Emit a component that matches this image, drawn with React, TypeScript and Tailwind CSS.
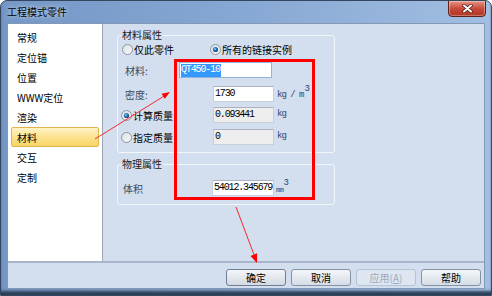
import React, { useId } from "react";

const CJK = "font-['Noto_Sans_CJK_SC','Noto_Sans',sans-serif]";
const MONO = "font-['Liberation_Mono','DejaVu_Sans_Mono',monospace]";

function Radio({ checked }: { checked?: boolean }) {
  const id = useId().replace(/:/g, "");
  return (
    <svg width="11" height="11" viewBox="0 0 11 11" className="shrink-0">
      <defs>
        <linearGradient id={`rg${id}`} x1="0" y1="0" x2="1" y2="1">
          <stop offset="0" stopColor="#d9dde3" />
          <stop offset="1" stopColor="#fbfcfd" />
        </linearGradient>
        <radialGradient id={`rd${id}`} cx="0.4" cy="0.4" r="0.6">
          <stop offset="0" stopColor="#8fd3f5" />
          <stop offset="0.5" stopColor="#2a7bb8" />
          <stop offset="1" stopColor="#173f73" />
        </radialGradient>
      </defs>
      <circle cx="5.5" cy="5.5" r="5" fill={`url(#rg${id})`} stroke="#8d969f" strokeWidth="1" />
      {checked && <circle cx="5.5" cy="5.5" r="2.6" fill={`url(#rd${id})`} />}
    </svg>
  );
}

function Field({
  value,
  w = "w-[61px]",
  grey,
}: {
  value: string;
  w?: string;
  grey?: boolean;
}) {
  return (
    <div
      className={`${w} h-[16px] shrink-0 flex items-center pl-[1px] overflow-hidden whitespace-nowrap border border-[#c6ced8] border-t-[#aab3bf] ${
        grey ? "bg-[#eeeeee]" : "bg-white"
      } ${MONO} text-[10px] tracking-[-1.15px] text-black leading-none`}
    >
      {value}
    </div>
  );
}

const items = ["常规", "定位锚", "位置", "WWW定位", "渲染", "材料", "交互", "定制"];

export default function App() {
  return (
    <div
      className={`relative w-[492px] h-[296px] overflow-hidden rounded-t-[7px] border border-[#34475f] bg-gradient-to-r from-[#7597c6] via-[#87a8d3] to-[#a2bee2] flex flex-col shadow-[inset_0_-5px_3px_-1px_#2b3f55] ${CJK}`}
    >
      {/* title bar */}
      <div className="h-[22px] shrink-0 flex items-start justify-between">
        <span className="pl-[6px] pt-[4px] text-[10px] leading-[14px] text-black [text-shadow:0_0_4px_#e6f0fb]">
          工程模式零件
        </span>
        <div className="-mt-px mr-[5px] w-[38px] h-[17px] rounded-b-[4px] border border-[#5d2119] bg-gradient-to-b from-[#e69585] via-[#c84a3b] to-[#b1311f] flex items-center justify-center shadow-[inset_0_0_1px_1px_rgba(255,255,255,0.35)]">
          <svg width="11" height="9" viewBox="0 0 11 9">
            <path d="M2 1.5 L9 7.5 M9 1.5 L2 7.5" stroke="#4a1a14" strokeWidth="3.4" strokeLinecap="round" />
            <path d="M2 1.5 L9 7.5 M9 1.5 L2 7.5" stroke="#ffffff" strokeWidth="2" strokeLinecap="round" />
          </svg>
        </div>
      </div>

      {/* client */}
      <div className="mx-[6px] mb-[6px] flex-1 min-h-0 flex flex-col border border-[#8398b5] bg-[#d3dfee]">
        <div className="flex h-[237px] shrink-0">
          {/* list */}
          <div className="w-[95px] shrink-0 bg-white border-r border-[#9ea6b1] pt-[3px] text-[10px] text-black">
            {items.map((it) =>
              it === "材料" ? (
                <div
                  key={it}
                  className="mx-[3px] h-[20px] flex items-center pl-[5px] rounded-[2px] border border-[#e0b64c] bg-gradient-to-b from-[#fef3c8] via-[#fce38f] to-[#f8d466]"
                >
                  {it}
                </div>
              ) : (
                <div key={it} className="h-[20px] flex items-center pl-[9px]">
                  {it}
                </div>
              )
            )}
          </div>

          {/* right panel */}
          <div className="flex-1 pl-[14px] pt-[4px] flex flex-col text-[10px]">
            <fieldset className="w-[218px] rounded-[3px] border border-[#f2f6fb] pb-[7px] flex flex-col">
              <legend className="ml-[3px] px-[1px] leading-[14px] text-[#1b1b1b]">材料属性</legend>
              <div className="flex items-center h-[14px] text-black">
                <div className="flex items-center gap-[1px] ml-[4px] w-[88px]">
                  <Radio />
                  <span>仅此零件</span>
                </div>
                <div className="flex items-center gap-[1px]">
                  <Radio checked />
                  <span>所有的链接实例</span>
                </div>
              </div>
              <div className="flex items-center h-[16px] mt-[6px]">
                <span className="ml-[7px] w-[54px] text-[#3a4b62]">材料:</span>
                <div className={`w-[93px] h-[16px] flex items-center pl-[1px] border border-[#8fb4e0] bg-white ${MONO} text-[10px] tracking-[-1.15px] leading-none`}>
                  <span className="bg-[#3399ff] text-white h-[13px] flex items-center pr-[1px]">QT450-10</span>
                </div>
              </div>
              <div className="flex items-center h-[16px] mt-[8px]">
                <span className="ml-[7px] w-[88px] text-[#3a4b62]">密度:</span>
                <Field value="1730" />
                <span className={`ml-[3px] ${MONO} text-[9px] tracking-[-1px] text-[#2a4677] flex items-start whitespace-nowrap`}>
                  <span className="mt-[3px]">kg / m</span>
                  <span className="-mt-[3px] ml-[1px]">3</span>
                </span>
              </div>
              <div className="flex items-center h-[16px] mt-[5px]">
                <div className="ml-[3px] w-[92px] flex items-center gap-[1px] text-black">
                  <Radio checked />
                  <span>计算质量</span>
                </div>
                <Field value="0.093441" grey />
                <span className={`ml-[3px] ${MONO} text-[9px] tracking-[-1px] text-[#2a4677]`}>kg</span>
              </div>
              <div className="flex items-center h-[16px] mt-[6px]">
                <div className="ml-[3px] w-[92px] flex items-center gap-[1px] text-black">
                  <Radio />
                  <span>指定质量</span>
                </div>
                <Field value="0" grey />
                <span className={`ml-[3px] ${MONO} text-[9px] tracking-[-1px] text-[#2a4677]`}>kg</span>
              </div>
            </fieldset>

            <fieldset className="mt-[4px] w-[218px] rounded-[3px] border border-[#f2f6fb] pb-[8px] flex flex-col">
              <legend className="ml-[3px] px-[1px] leading-[14px] text-[#1b1b1b]">物理属性</legend>
              <div className="flex items-center h-[16px] mt-[9px]">
                <span className="ml-[5px] w-[89px] text-[#3a4b62]">体积</span>
                <Field value="54012.345679" w="w-[62px]" />
                <span className={`ml-[2px] ${MONO} text-[#2a4677] flex items-start whitespace-nowrap`}>
                  <span className="text-[7px] mt-[5px] tracking-[-0.5px]">mm</span>
                  <span className="text-[9px] -mt-[3px]">3</span>
                </span>
              </div>
            </fieldset>
          </div>
        </div>

        <div className="h-[2px] shrink-0 bg-[#a7b6ca]" />

        {/* buttons */}
        <div className="flex-1 flex justify-end items-start gap-[5px] pt-[6px] pr-[3px] text-[10px]">
          <button className="w-[60px] h-[17px] rounded-[3px] border border-[#6f7f96] bg-gradient-to-b from-[#f4f6f9] to-[#d3dae4] text-black leading-none">
            确定
          </button>
          <button className="w-[60px] h-[17px] rounded-[3px] border border-[#8492a5] bg-gradient-to-b from-[#f4f6f9] to-[#d6dde6] text-black leading-none">
            取消
          </button>
          <button className="w-[60px] h-[17px] rounded-[3px] border border-[#b6c2d1] bg-[#dde6f1] text-[#9ea9b8] leading-none">
            应用(<span className="underline">A</span>)
          </button>
          <button className="w-[60px] h-[17px] rounded-[3px] border border-[#8492a5] bg-gradient-to-b from-[#f4f6f9] to-[#d6dde6] text-black leading-none">
            帮助
          </button>
        </div>
      </div>

      {/* annotations */}
      <svg className="absolute -left-px -top-px pointer-events-none" width="492" height="296">
        <rect x="175.5" y="60.5" width="138" height="138" fill="none" stroke="#ff0000" strokeWidth="3" />
        <line x1="95" y1="139" x2="165" y2="95.5" stroke="#f52a2a" strokeWidth="1" />
        <polygon points="170,92 161.6,93.7 164.8,98.7" fill="#ff0000" />
        <line x1="236" y1="207" x2="254.5" y2="256" stroke="#f52a2a" strokeWidth="1" />
        <polygon points="257,263 257.1,253.3 250.5,255.9" fill="#ff0000" />
      </svg>
    </div>
  );
}
